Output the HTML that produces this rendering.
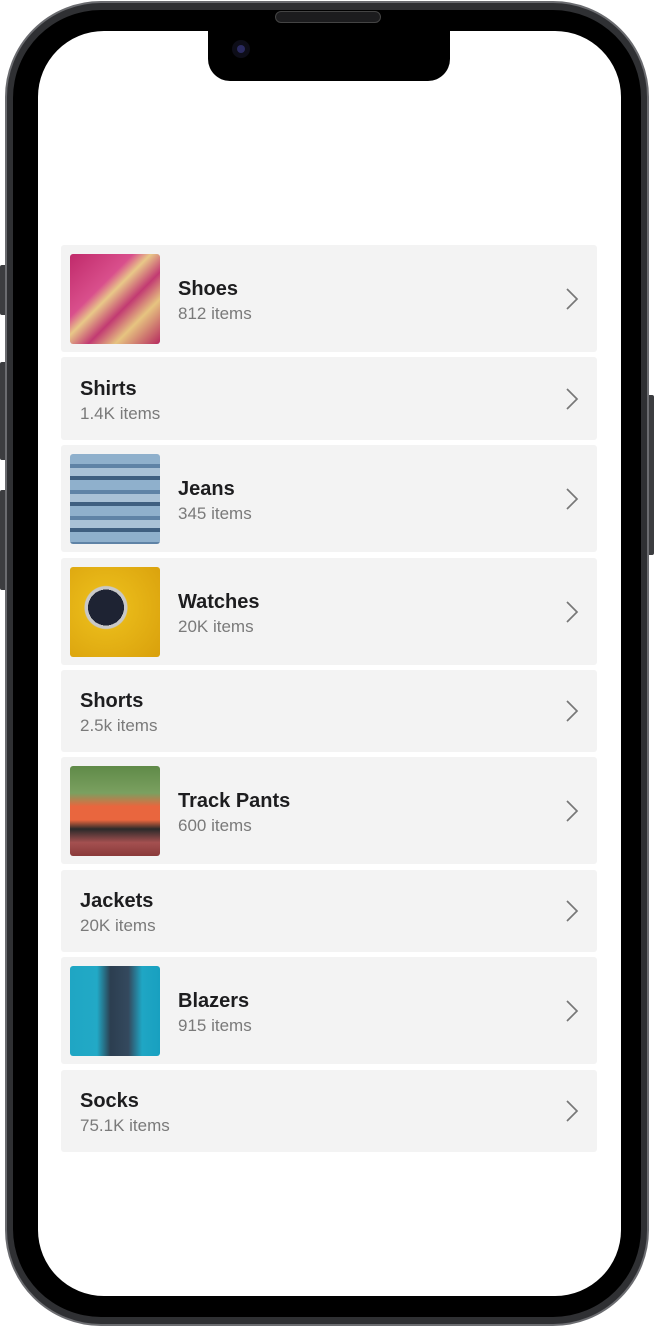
<!DOCTYPE html>
<html><head><meta charset="utf-8"><style>
*{margin:0;padding:0;box-sizing:border-box}
body{width:654px;height:1327px;background:#fff;position:relative;overflow:hidden;font-family:"Liberation Sans",sans-serif}
.btn{position:absolute;background:#3c3d40;border-radius:2px}
.body{position:absolute;left:5px;top:1px;width:644px;height:1325px;border-radius:96px;background:#2f3033;border:2px solid #6b6c70}
.inner{position:absolute;left:13px;top:10px;width:628px;height:1307px;border-radius:88px;background:#000}
.screen{position:absolute;left:38px;top:31px;width:583px;height:1265px;border-radius:66px;background:#fff;overflow:hidden}
.notch{position:absolute;left:208px;top:25px;width:242px;height:56px;background:#000;border-radius:0 0 22px 22px}
.spk{position:absolute;left:275px;top:11px;width:106px;height:12px;border-radius:6px;background:#1c1c1e;border:1px solid #444}
.cam{position:absolute;left:232px;top:40px;width:18px;height:18px;border-radius:50%;background:#0d0d18}
.cam:after{content:"";position:absolute;left:5px;top:5px;width:8px;height:8px;border-radius:50%;background:#2a2a60}
.row{position:absolute;left:61px;width:536px;background:#f3f3f3;border-radius:3px}
.img{position:absolute;left:9px;top:9px;width:90px;height:90px;border-radius:3px}
.t{position:absolute;font-size:20px;font-weight:bold;color:#1d1d1f;margin-top:1px}
.s{position:absolute;font-size:17px;color:#7a7a7a;margin-top:2px}
.ch{position:absolute;left:504px;width:14px;height:24px}
</style></head><body>
<div class="btn" style="left:0;top:265px;width:7px;height:50px"></div>
<div class="btn" style="left:0;top:362px;width:7px;height:98px"></div>
<div class="btn" style="left:0;top:490px;width:7px;height:100px"></div>
<div class="btn" style="left:647px;top:395px;width:7px;height:160px"></div>
<div class="body"></div>
<div class="inner"></div>
<div class="screen"></div>
<div class="notch"></div>
<div class="spk"></div>
<div class="cam"></div>

<div class="row" style="top:245px;height:107px"><div class="img" style="background:linear-gradient(135deg,#c02a6a 0%,#d94f8c 35%,#e8c888 45%,#c23a72 60%,#e6c480 75%,#b5285e 100%)"></div><div class="t" style="left:117px;top:32px">Shoes</div><div class="s" style="left:117px;top:57px">812 items</div><svg class="ch" style="top:42px" viewBox="0 0 14 24"><path d="M2 2l10 10-10 10" fill="none" stroke="#777" stroke-width="1.7"/></svg></div>

<div class="row" style="top:357px;height:83px"><div class="t" style="left:19px;top:20px">Shirts</div><div class="s" style="left:19px;top:45px">1.4K items</div><svg class="ch" style="top:30px" viewBox="0 0 14 24"><path d="M2 2l10 10-10 10" fill="none" stroke="#777" stroke-width="1.7"/></svg></div>

<div class="row" style="top:445px;height:107px"><div class="img" style="background:repeating-linear-gradient(180deg,#8fb0cc 0 10px,#5f83a6 10px 14px,#a9c1d6 14px 22px,#3f5f80 22px 26px)"></div><div class="t" style="left:117px;top:32px">Jeans</div><div class="s" style="left:117px;top:57px">345 items</div><svg class="ch" style="top:42px" viewBox="0 0 14 24"><path d="M2 2l10 10-10 10" fill="none" stroke="#777" stroke-width="1.7"/></svg></div>

<div class="row" style="top:558px;height:107px"><div class="img" style="background:radial-gradient(circle at 40% 45%,#1e2333 0 18px,#c8c8c8 18px 21px,#e8b818 22px,#d9a00c 100%)"></div><div class="t" style="left:117px;top:32px">Watches</div><div class="s" style="left:117px;top:57px">20K items</div><svg class="ch" style="top:42px" viewBox="0 0 14 24"><path d="M2 2l10 10-10 10" fill="none" stroke="#777" stroke-width="1.7"/></svg></div>

<div class="row" style="top:670px;height:82px"><div class="t" style="left:19px;top:19px">Shorts</div><div class="s" style="left:19px;top:44px">2.5k items</div><svg class="ch" style="top:29px" viewBox="0 0 14 24"><path d="M2 2l10 10-10 10" fill="none" stroke="#777" stroke-width="1.7"/></svg></div>

<div class="row" style="top:757px;height:107px"><div class="img" style="background:linear-gradient(180deg,#5f8a48 0%,#7aa060 30%,#e9663e 45%,#e9663e 60%,#2a2a2a 70%,#a45050 85%,#8a3a3a 100%)"></div><div class="t" style="left:117px;top:32px">Track Pants</div><div class="s" style="left:117px;top:57px">600 items</div><svg class="ch" style="top:42px" viewBox="0 0 14 24"><path d="M2 2l10 10-10 10" fill="none" stroke="#777" stroke-width="1.7"/></svg></div>

<div class="row" style="top:870px;height:82px"><div class="t" style="left:19px;top:19px">Jackets</div><div class="s" style="left:19px;top:44px">20K items</div><svg class="ch" style="top:29px" viewBox="0 0 14 24"><path d="M2 2l10 10-10 10" fill="none" stroke="#777" stroke-width="1.7"/></svg></div>

<div class="row" style="top:957px;height:107px"><div class="img" style="background:linear-gradient(90deg,#1fa6c4 0%,#22a9c6 30%,#2c3e50 45%,#34495e 65%,#1fa6c4 80%,#18a0c0 100%)"></div><div class="t" style="left:117px;top:32px">Blazers</div><div class="s" style="left:117px;top:57px">915 items</div><svg class="ch" style="top:42px" viewBox="0 0 14 24"><path d="M2 2l10 10-10 10" fill="none" stroke="#777" stroke-width="1.7"/></svg></div>

<div class="row" style="top:1070px;height:82px"><div class="t" style="left:19px;top:19px">Socks</div><div class="s" style="left:19px;top:44px">75.1K items</div><svg class="ch" style="top:29px" viewBox="0 0 14 24"><path d="M2 2l10 10-10 10" fill="none" stroke="#777" stroke-width="1.7"/></svg></div>
</body></html>
